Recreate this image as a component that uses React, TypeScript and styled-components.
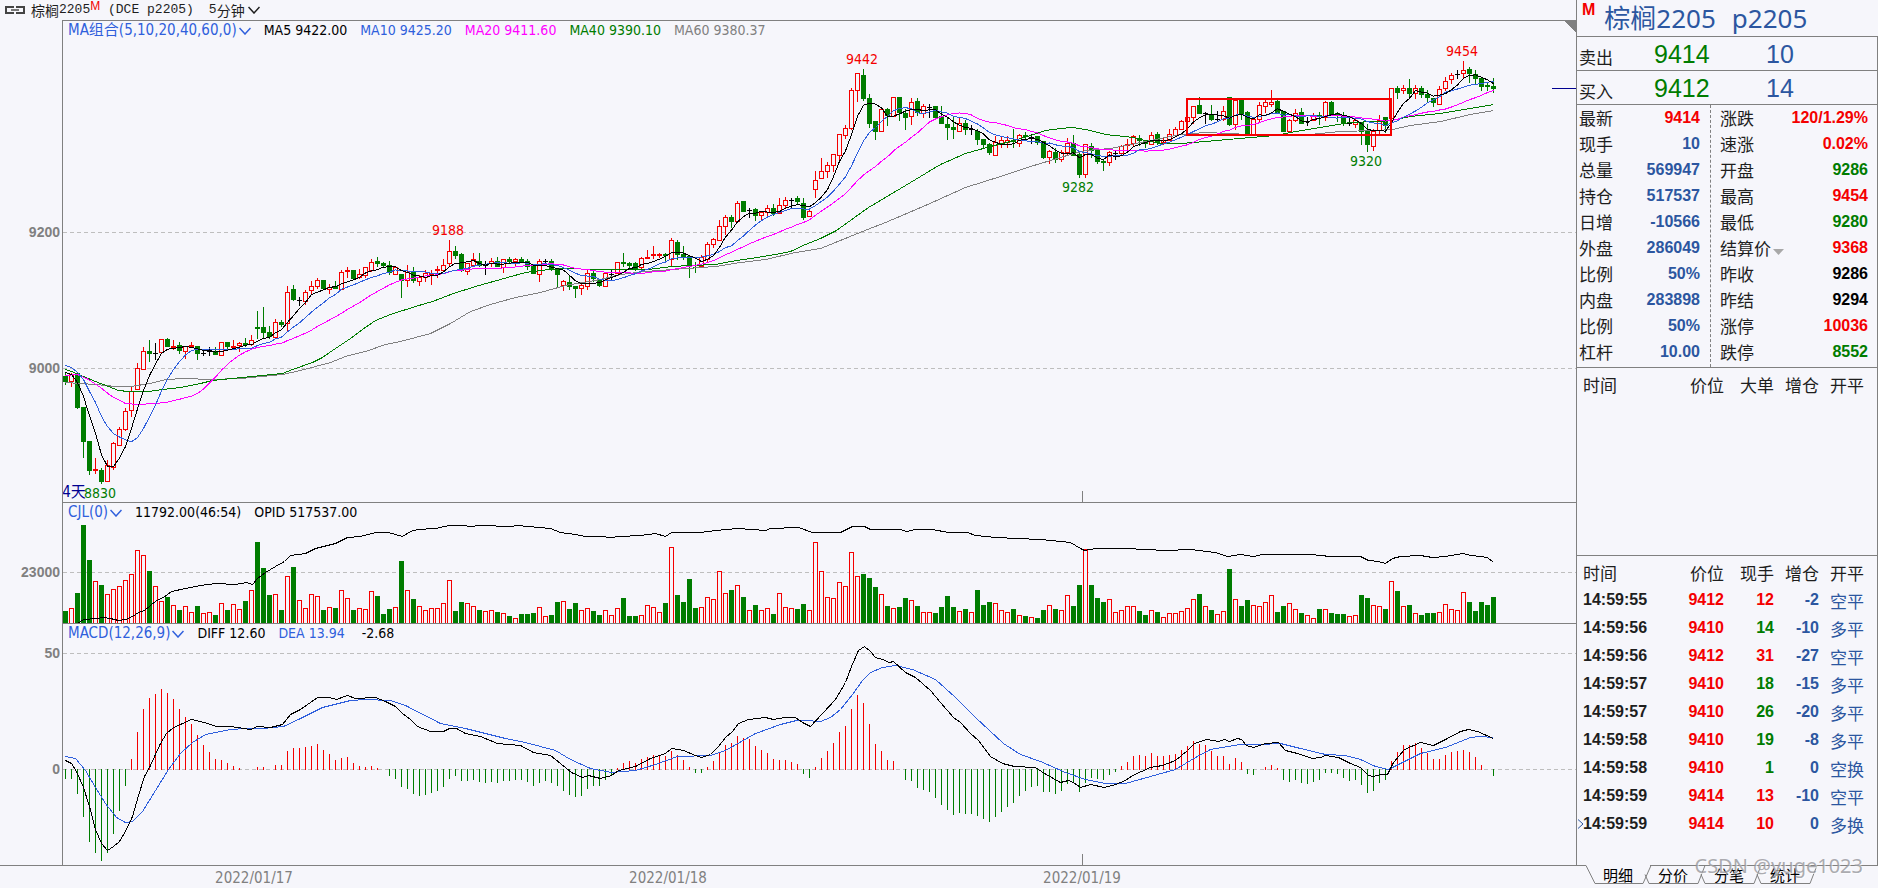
import React from "react";
import styled, { createGlobalStyle } from "styled-components";

const COLORS = {
  page: "#f6f6fb",
  line: "#808080",
  grid: "#bebebe",
  up: "#f40000",
  down: "#007c00",
  black: "#000000",
  blue: "#2f5fdc",
  magenta: "#ff00ff",
  slate: "#2c56a0",
  grey: "#808080",
  ink: "#1e1e1e",
};

const CHART_FONT = '"DejaVu Sans Condensed", "Noto Sans", "Noto Sans CJK SC", sans-serif';
const PANEL_FONT = '"Noto Sans CJK SC", sans-serif';
const NUMBER_FONT = '"Liberation Sans", "Noto Sans CJK SC", sans-serif';

/* Candles: kind (U up, D down, K unchanged), body top, body bottom, high, low. */
const CANDLES = `D376,382,373,385 U374,381,373,387 D373,408,372,409 D407,442,407,458 D441,471,441,475 U469,470,458,474 D470,482,468,484 U465,481,460,482 U443,467,442,470 U429,445,427,446
U411,429,408,431 U391,410,386,417 U368,389,363,390 U351,369,347,370 D351,354,340,362 K353,353,343,360 U339,352,339,353 D339,347,338,347 U346,347,340,350 D345,351,342,354
U346,351,346,359 U345,346,342,348 D346,354,346,360 K353,353,349,356 K351,351,347,356 D351,355,347,355 U342,355,342,356 D342,347,342,349 U346,347,340,349 U343,345,342,352
D343,345,338,347 U340,344,335,346 D327,329,311,339 D327,333,307,339 D332,337,326,339 U322,337,319,338 D322,325,320,327 U292,323,286,331 D289,300,285,301 K300,300,297,306
U292,301,290,305 U286,290,281,294 U280,286,278,289 D280,289,280,289 U287,289,284,294 D286,289,281,289 U272,289,270,289 U270,271,267,278 D270,279,270,279 U274,277,269,279
U267,275,267,278 U262,270,259,272 D261,264,257,267 D263,266,262,267 D265,273,261,275 U267,274,267,275 D274,281,274,298 U272,280,265,287 D271,281,267,283 U277,281,275,286
U273,277,270,282 U273,274,270,285 U269,270,266,278 U265,270,259,272 U251,263,240,266 D251,256,246,259 D254,271,253,272 U263,271,263,275 U259,265,253,267 D261,266,253,267
K265,265,261,275 U261,263,258,267 D261,267,257,267 U259,267,259,273 D259,262,257,264 U259,261,258,266 D259,262,257,263 D261,267,259,270 D266,274,266,274 U261,274,259,282
K261,261,259,264 D261,270,259,271 D268,275,268,287 U281,285,280,291 D282,287,275,290 D286,289,286,298 U285,288,283,295 U273,286,270,290 D273,279,271,282 D280,286,280,287
U273,286,273,286 K274,274,270,280 U262,273,262,273 D262,264,253,267 D263,266,262,268 D263,270,262,271 U258,267,257,270 U257,258,250,259 U254,255,246,259 U254,255,253,258
D254,256,253,261 U240,259,238,267 D242,255,240,260 D254,258,246,260 D256,267,256,278 D267,268,262,273 U257,266,255,267 U244,259,242,262 U239,244,238,248 U226,240,220,241
U217,226,215,235 D217,222,215,228 U203,221,201,222 D201,212,201,212 K210,210,208,218 D209,216,208,221 U212,215,211,220 U208,212,205,218 D208,214,204,216 U205,213,198,214
U200,205,197,208 K200,200,198,208 D198,202,196,205 D203,218,198,220 U211,216,208,217 U180,189,171,198 U171,178,158,179 U165,171,162,178 U154,165,154,172 U134,155,134,161
U128,135,125,139 U90,128,88,130 U73,90,73,102 D75,99,69,101 D98,124,94,128 D121,132,121,140 U109,131,108,132 D109,116,108,126 U97,116,97,117 D97,113,97,121
D113,118,109,130 U102,116,98,125 D101,113,98,116 U106,113,104,118 K107,107,104,118 D106,118,106,118 D116,124,106,124 D124,128,118,140 D127,130,117,139 U123,131,117,132
D123,130,120,135 K129,129,125,135 D131,140,129,145 D139,145,139,148 D144,153,143,155 U142,155,136,155 U140,143,137,148 U140,142,136,148 D140,142,129,148 U135,143,134,147
D135,137,132,139 K137,137,134,144 D136,143,136,145 D141,158,141,159 U151,157,150,164 D152,160,148,163 U152,159,150,162 U143,152,138,155 D143,156,135,156 D154,175,152,178
U144,174,144,178 D146,151,143,158 D150,162,150,164 D161,163,159,171 U152,162,151,166 K153,153,150,160 U146,153,145,155 U144,145,139,152 U136,143,135,146 D138,141,135,146
D142,144,142,148 U135,144,132,145 D134,143,132,145 U140,142,137,145 U134,140,129,141 U129,135,127,136 U121,129,120,130 U117,121,116,121 U106,117,106,124 D105,114,97,114
K113,113,112,124 D114,120,105,121 K119,119,111,122 U111,119,106,121 D97,125,97,126 U100,124,99,130 D99,114,99,120 D112,134,111,134 U119,134,119,134 U105,119,102,122
U102,106,100,113 U102,104,90,107 D101,113,100,113 D111,132,111,132 U120,131,119,132 U113,120,109,122 D112,124,108,124 K121,121,117,126 U116,120,113,121 D115,117,112,125
U102,117,101,121 D102,115,101,115 D113,116,112,122 D115,124,112,126 K123,123,118,126 U120,124,117,128 D122,132,122,145 D131,145,124,152 U131,146,129,151 U120,130,115,134
D117,126,117,133 U88,118,88,118 D88,93,86,99 U88,90,85,94 D88,94,79,97 U88,93,85,99 D88,95,86,98 D94,98,90,103 D98,103,98,107 U89,104,86,105
U81,88,77,91 U75,79,73,84 K74,74,70,79 U70,73,61,78 D69,74,67,83 D74,79,70,84 D78,87,78,91 D85,87,82,91 D86,89,78,93`
  .split(/\s+/)
  .map((entry) => {
    const [top, bottom, high, low] = entry.slice(1).split(",").map(Number);
    const kind = entry[0];
    return { kind, top, bottom, high, low, close: kind === "D" ? bottom : top };
  });

const numbers = (text: string) => text.trim().split(/\s+/).map(Number);

/* Top edge of each volume bar. */
const VOLUME = numbers(`
611 608 593 525 560 581 585 594 589 586 580 574 550 555 571 586 601 597 605 610
606 612 606 613 612 615 603 610 604 609 601 590 542 568 595 594 610 576 567 600
608 594 596 610 607 608 590 598 610 608 609 591 596 614 609 607 561 590 599 606
610 608 608 603 580 611 602 603 606 610 611 610 612 613 616 618 614 614 613 607
616 615 602 601 609 603 610 608 611 615 610 615 608 598 616 616 615 605 607 612
603 547 595 602 579 608 607 597 599 571 593 590 585 597 610 605 610 608 614 593
607 608 609 604 610 542 571 597 598 582 586 552 576 574 578 587 594 606 608 607
598 600 606 612 612 613 607 596 607 611 609 612 590 605 602 603 610 612 609 615
616 617 618 610 605 609 610 595 606 585 549 585 598 602 599 612 610 606 606 611
615 610 612 617 613 613 611 608 599 594 606 610 614 611 569 599 606 600 605 606
602 595 612 606 603 609 613 615 618 609 609 613 614 614 616 615 595 598 605 606
609 581 591 606 605 613 615 613 613 612 604 609 610 592 602 611 602 605 597`);

/* MACD histogram; three units per pixel, positive above the zero line. */
const HISTOGRAM = numbers(`
-26 -26 -71 -140 -215 -248 -272 -248 -191 -122 -47 30 112 181 214 226 241 229 211 181
156 136 103 73 52 31 27 19 10 4 0 0 7 7 1 13 13 55 64 64
67 70 76 58 46 28 34 37 19 10 7 10 4 0 -19 -26 -50 -56 -71 -77
-74 -68 -62 -50 -26 -17 -32 -32 -29 -35 -38 -35 -38 -32 -32 -29 -29 -35 -47 -38
-32 -38 -47 -62 -74 -80 -77 -56 -47 -47 -29 -14 4 19 25 19 31 37 42 43
40 55 42 28 7 -8 -8 7 25 49 73 79 100 94 91 70 58 48 31 28
28 22 16 -11 -23 7 34 55 79 112 130 181 223 199 136 76 55 28 25 0
-29 -32 -53 -59 -65 -83 -104 -119 -134 -128 -131 -131 -137 -146 -155 -140 -125 -110 -98 -77
-62 -50 -47 -65 -65 -71 -62 -41 -38 -65 -38 -23 -26 -29 -14 -5 10 22 40 43
40 49 40 40 43 46 58 70 85 76 73 55 40 40 16 34 22 -11 -14 0
7 13 4 -29 -35 -29 -38 -41 -35 -29 -8 -8 -11 -23 -32 -29 -44 -68 -62 -38
-29 25 52 73 73 79 64 49 31 31 43 52 55 58 52 37 13 0 -17`);

const MA40 = "65,369 71,371 83,376 95,381 108,386 118,390 128,391 148,391 162,389 180,387 200,383 212,380 232,378 252,376 282,373 292,369 312,362 322,357 332,350 350,338 362,329 375,320 390,314 415,306 432,301 453,293 475,286 500,279 525,272 540,270 560,268 600,269 648,269 672,266 690,265 715,264 730,261 750,258 775,254 790,251 805,244 820,238 836,230 868,207 895,191 925,173 940,164 965,153 990,146 1010,141 1030,135 1045,130 1060,128 1072,127 1090,130 1105,134 1133,137 1140,139 1160,143 1180,143 1205,141 1250,137 1275,135 1295,131 1320,127 1350,122 1375,121 1390,120 1410,116 1440,113 1470,108 1493,104";
const MA60 = "65,382 95,384 115,386 130,386 150,383 165,379 185,378 210,379 240,378 282,374 300,370 330,362 345,356 368,350 385,344 400,341 430,333 450,323 470,311 490,304 515,297 540,292 565,285 600,279 620,274 645,271 672,269 715,266 740,262 765,259 795,252 820,248 867,229 885,222 925,205 945,196 965,187 1000,176 1030,166 1050,160 1070,154 1085,150 1110,148 1130,144 1150,140 1180,134 1205,132 1250,134 1275,135 1310,134 1340,131 1375,130 1392,129 1410,125 1440,121 1470,114 1493,110";
const OPEN_INTEREST = "77,623 83,619 97,618 103,617 110,618 118,620 125,619 132,616 138,612 144,610 150,605 156,600 163,597 171,591 185,588 200,585 215,583 235,584 246,582 252,584 257,578 265,572 275,566 284,561 290,555 305,553 315,548 335,543 347,537 360,536 375,532 388,532 395,534 402,536 410,531 417,529 435,528 449,525 463,525 470,526 480,525 510,526 517,525 550,528 560,532 575,534 585,536 600,536 610,537 620,536 640,535 655,533 665,536 671,532 700,532 715,530 737,528 765,530 770,528 798,527 812,532 840,532 852,526 864,526 870,529 900,529 906,531 915,529 932,529 948,532 967,532 975,535 995,537 1040,539 1070,542 1080,548 1084,550 1095,548 1125,548 1165,550 1190,549 1215,552 1227,556 1240,554 1253,556 1262,554 1310,554 1330,556 1360,556 1368,560 1378,561 1385,563 1392,558 1400,556 1420,555 1432,557 1445,556 1463,553 1470,555 1480,556 1487,557 1493,562";
const DIFF = "65,760 71,763 76,771 83,787 89,806 95,829 101,843 107,850 113,846 119,841 126,829 132,816 138,795 144,776 150,765 160,743 166,733 173,727 180,724 191,719 204,722 216,726 230,726 250,729 257,726 270,727 282,724 290,714 300,709 317,697 329,697 336,699 347,695 355,698 375,697 385,701 395,706 402,713 410,719 417,726 430,731 443,731 449,728 456,728 465,733 480,736 497,743 520,745 533,752 550,755 560,763 571,772 582,777 588,775 600,778 611,775 618,770 635,766 650,758 665,753 671,748 683,750 695,755 701,757 710,754 718,746 725,737 732,731 738,723 748,719 765,717 773,719 785,717 795,717 802,722 810,726 822,713 835,699 845,682 851,666 858,650 864,646 870,651 875,657 882,659 889,662 893,661 905,672 915,677 930,690 940,702 953,717 960,722 970,733 978,740 990,756 1002,763 1014,766 1035,767 1044,773 1060,782 1068,780 1073,782 1080,787 1090,784 1104,787 1115,784 1125,780 1132,775 1150,767 1162,765 1175,760 1187,750 1194,743 1206,739 1218,741 1224,739 1229,741 1237,738 1241,739 1246,745 1253,747 1265,743 1278,742 1285,750 1297,753 1312,758 1320,757 1325,755 1338,757 1350,763 1360,767 1368,775 1373,776 1380,774 1387,774 1393,762 1404,749 1420,742 1433,745 1445,739 1460,731 1468,729 1477,731 1493,738";
const DEA = "65,756 75,758 85,770 95,787 105,803 116,817 125,822 132,821 142,811 155,790 168,769 180,753 192,742 205,734 230,729 245,728 262,728 283,726 300,718 322,707 350,700 365,699 390,700 405,705 440,723 465,728 505,738 525,742 555,750 570,759 590,768 611,772 635,770 655,764 677,756 710,755 725,750 755,733 780,724 796,720 805,720 820,721 830,717 840,709 852,694 862,680 870,672 882,667 895,665 912,669 935,679 955,697 975,717 1003,743 1020,754 1040,761 1065,772 1085,779 1105,783 1125,783 1150,776 1175,769 1195,757 1210,749 1240,744 1260,744 1280,743 1300,748 1325,754 1345,755 1360,759 1375,766 1388,769 1400,763 1420,753 1445,747 1470,737 1480,736 1493,737";

const FIRST_X = 65;
const STEP = 6;
const barX = (i: number) => FIRST_X + i * STEP;

/* Moving average of the closes; `lead` covers the bars before a full window. */
function movingAverage(period: number, lead: string) {
  const points: string[] = [lead];
  for (let i = period - 1; i < CANDLES.length; i++) {
    const window = CANDLES.slice(i - period + 1, i + 1);
    const mean = window.reduce((sum, c) => sum + c.close, 0) / period;
    points.push(`${barX(i)},${mean.toFixed(1)}`);
  }
  return points.join(" ");
}

const MA5 = movingAverage(5, "65,372 71,374 77,382 83,396");
const MA10 = movingAverage(10, "65,365 71,367 77,372 83,379 89,391 95,402 101,416 107,426 113,433");
const MA20 = movingAverage(20, "65,375 77,374 88,379 100,387 110,395 125,403 137,404 155,403 165,402");

const GlobalStyle = createGlobalStyle`
  *, *::before, *::after { box-sizing: border-box; }
  body { margin: 0; background: ${COLORS.page}; color: ${COLORS.ink}; }
  button { font: inherit; color: inherit; background: none; border: 0; padding: 0; cursor: pointer; }
`;

const Terminal = styled.div`
  display: flex;
  min-height: 100vh;
  background: ${COLORS.page};
  overflow: hidden;
`;

const ChartColumn = styled.main`
  flex: 1 1 0;
  min-width: 0;
`;

const SymbolBar = styled.header`
  display: flex;
  align-items: center;
  height: 20px;
  padding-left: 5px;
  gap: 6px;
  font: 13px/20px "Liberation Mono", "Noto Sans CJK SC", monospace;
  white-space: pre;
`;

const SymbolName = styled.h1`
  display: flex;
  margin: 0;
  font: inherit;
`;

const Hanzi = styled.span`
  font: 14px/20px ${PANEL_FONT};
`;

const MainFlag = styled.span`
  color: ${COLORS.up};
  font: 12px/12px "Liberation Sans", sans-serif;
`;

const PeriodButton = styled.button`
  display: flex;
  align-items: center;
  margin-left: 9px;

  svg { margin-left: 3px; }
`;

const Pane = styled.section<{ $height: number }>`
  display: flex;
  height: ${(p) => p.$height}px;
`;

const Axis = styled.svg`
  flex: 0 0 62px;
  width: 62px;
  height: 100%;
  font: bold 14px ${NUMBER_FONT};
  fill: ${COLORS.grey};
  text-anchor: end;
`;

const Plot = styled.div`
  position: relative;
  flex: 1 1 0;
  min-width: 0;
  border-left: 1px solid ${COLORS.line};
  border-top: 1px solid ${COLORS.line};
`;

const Canvas = styled.svg`
  display: block;
  width: 100%;
  height: 100%;
  font: 14px ${CHART_FONT};
  text-anchor: middle;
  shape-rendering: crispEdges;
`;

const DaysLabel = styled.text`
  font-size: 15px;
  fill: #000090;
`;

const Legend = styled.div`
  position: absolute;
  top: 0;
  left: 5px;
  display: flex;
  gap: 13px;
  font: 14px/19px ${CHART_FONT};
  white-space: pre;
`;

const LegendItem = styled.span<{ $color: string }>`
  color: ${(p) => p.$color};
`;

const IndicatorButton = styled.button`
  display: flex;
  align-items: center;
  gap: 2px;
  font-size: 15px;
  color: ${COLORS.blue};
`;

const DateRow = styled.div`
  height: 22px;
  border-top: 1px solid ${COLORS.line};
`;

const DateAxis = styled.svg`
  display: block;
  width: 100%;
  height: 21px;
  font: 15px ${CHART_FONT};
  fill: ${COLORS.grey};
  text-anchor: middle;
`;

const SidePanel = styled.aside`
  display: flex;
  flex-direction: column;
  flex: 0 0 302px;
  font-family: ${PANEL_FONT};
`;

const PanelBody = styled.div`
  display: flex;
  flex-direction: column;
  height: 866px;
  border-left: 1px solid ${COLORS.line};
`;

const Title = styled.h2`
  display: flex;
  margin: 0;
  height: 36px;
  padding-left: 5px;
  font: 26px/36px "Noto Sans", ${PANEL_FONT};
  color: ${COLORS.slate};

  sup { font: bold 16px/20px ${NUMBER_FONT}; color: ${COLORS.up}; }
`;

const TitlePart = styled.span<{ $gap: number }>`
  margin-left: ${(p) => p.$gap}px;
`;

const QuoteRow = styled.div`
  display: grid;
  grid-template-columns: 75px 112px 1fr;
  height: 34px;
  padding-left: 2px;
  border-top: 1px solid ${COLORS.line};
  border-right: 1px solid ${COLORS.line};
  align-items: center;
`;

const QuoteLabel = styled.span`
  font-size: 17px;
  line-height: 24px;
  padding-top: 6px;
`;

const QuoteValue = styled.span<{ $color: string }>`
  font: 25px/32px ${NUMBER_FONT};
  color: ${(p) => p.$color};
`;

const Stats = styled.div`
  display: flex;
  height: 263px;
  border-top: 1px solid ${COLORS.line};
  border-right: 1px solid ${COLORS.line};
`;

const StatList = styled.dl<{ $first?: boolean }>`
  margin: 0;
  flex: ${(p) => (p.$first ? "0 0 134px" : "1 1 0")};
  padding: ${(p) => (p.$first ? "0 10px 0 2px" : "0 9px 0 9px")};
  border-right: ${(p) => (p.$first ? `1px dashed ${COLORS.line}` : "0")};
`;

const Stat = styled.div`
  display: flex;
  justify-content: space-between;
  height: 26px;
  line-height: 25px;
  font-size: 17px;
  white-space: nowrap;
`;

const StatValue = styled.dd<{ $color: string }>`
  margin: 0;
  font: bold 16px/26px ${NUMBER_FONT};
  color: ${(p) => p.$color};
`;

const SettleButton = styled.button`
  display: flex;
  align-items: center;
  gap: 2px;
  line-height: 25px;

  svg { margin-top: 8px; }
`;

const Trades = styled.div<{ $grow?: boolean }>`
  flex: ${(p) => (p.$grow ? "1 1 0" : "0 0 188px")};
  border-top: 1px solid ${COLORS.line};
  border-right: 1px solid ${COLORS.line};
  padding-top: 2px;
`;

const TradeTable = styled.table`
  width: 100%;
  table-layout: fixed;
  border-collapse: collapse;
  text-align: right;

  th, td { padding: 0; height: 28px; line-height: 28px; white-space: nowrap; }
  th { font-size: 17px; font-weight: 400; line-height: 27px; }
  td { font: bold 16px/28px ${NUMBER_FONT}; }
  th:first-child, td:first-child { text-align: left; padding-left: 6px; position: relative; }
  th:last-child, td:last-child { text-align: left; padding-left: 11px; }
  td:last-child { font: 17px/27px ${PANEL_FONT}; }
`;

const Cell = styled.td<{ $color: string }>`
  color: ${(p) => p.$color};
`;

const RowMarker = styled.svg`
  position: absolute;
  left: 0;
  top: 9px;
`;

const Tabs = styled.nav`
  position: relative;
  display: flex;
  align-items: flex-start;
  height: 22px;
  margin-top: -1px;

  &::before { content: ""; width: 10px; border-top: 1px solid ${COLORS.line}; }
  &::after { content: ""; flex: 1; border-top: 1px solid ${COLORS.line}; }
`;

const TabButton = styled.button<{ $active?: boolean }>`
  position: relative;
  width: ${(p) => (p.$active ? 64 : 56)}px;
  height: 19px;
  padding-left: ${(p) => (p.$active ? 0 : 8)}px;
  text-align: ${(p) => (p.$active ? "center" : "left")};
  border-top: 1px solid ${(p) => (p.$active ? "transparent" : COLORS.line)};
  font: 15px/16px ${PANEL_FONT};
  color: ${COLORS.black};

  svg { position: absolute; left: ${(p) => (p.$active ? 0 : -6)}px; top: -1px; overflow: visible; pointer-events: none; }
`;

const Watermark = styled.span`
  position: absolute;
  right: 15px;
  top: -12px;
  font: 20px/26px "Noto Sans", sans-serif;
  color: rgba(150, 150, 155, 0.8);
  text-shadow: 1px 1px 0 rgba(255, 255, 255, 0.6);
  pointer-events: none;
`;

const Chevron = ({ color }: { color: string }) => (
  <svg width="12" height="8" viewBox="0 0 12 8" fill="none" stroke={color} strokeWidth="1.5" aria-hidden="true">
    <path d="M0.5 1 L6 7 L11.5 1" />
  </svg>
);

const LinkIcon = () => (
  <svg width="20" height="8" viewBox="0 0 20 8" fill="none" stroke="#444" strokeWidth="2" aria-hidden="true">
    <path d="M8 2V1H1V7H8V6M12 2V1H19V7H12V6" />
    <path d="M6 4H14" stroke="#777" />
  </svg>
);

const GridLine = ({ y }: { y: number }) => (
  <line x1="0" x2="100%" y1={y + 0.5} y2={y + 0.5} stroke={COLORS.grid} strokeDasharray="4 3" />
);

const Curve = ({ points, color }: { points: string; color: string }) => (
  <polyline points={points} fill="none" stroke={color} transform="translate(0.5 0.5)" />
);

const Candle = ({ index }: { index: number }) => {
  const { kind, top, bottom, high, low } = CANDLES[index];
  const x = barX(index);
  const color = kind === "U" ? COLORS.up : kind === "D" ? COLORS.down : COLORS.black;
  return (
    <g>
      <rect x={x} y={high} width={1} height={Math.max(low - high, 1)} fill={color} />
      {kind === "U" ? (
        <rect x={x - 1.5} y={top + 0.5} width={4} height={Math.max(bottom - top, 1)} fill={COLORS.page} stroke={color} />
      ) : (
        <rect x={x - 2} y={top} width={5} height={Math.max(bottom - top, 1)} fill={color} />
      )}
    </g>
  );
};

const VolumeBar = ({ index }: { index: number }) => {
  const x = barX(index);
  const y = VOLUME[index];
  return CANDLES[index].kind === "D" ? (
    <rect x={x - 2} y={y} width={5} height={623 - y} fill={COLORS.down} />
  ) : (
    <rect x={x - 1.5} y={y + 0.5} width={4} height={623 - y} fill={COLORS.page} stroke={COLORS.up} />
  );
};

const HistogramBar = ({ index }: { index: number }) => {
  const size = Math.round(HISTOGRAM[index] / 3);
  if (size === 0) return null;
  return (
    <rect
      x={barX(index)}
      y={size > 0 ? 769 - size : 769}
      width={1}
      height={Math.abs(size) + 1}
      fill={size > 0 ? COLORS.up : COLORS.down}
    />
  );
};

const EXTREMES: [number, number, string, string][] = [
  [100, 498, "8830", COLORS.down],
  [448, 235, "9188", COLORS.up],
  [862, 64, "9442", COLORS.up],
  [1078, 192, "9282", COLORS.down],
  [1366, 166, "9320", COLORS.down],
  [1462, 56, "9454", COLORS.up],
];

const STATS_LEFT: [string, string, string][] = [
  ["最新", "9414", COLORS.up],
  ["现手", "10", COLORS.slate],
  ["总量", "569947", COLORS.slate],
  ["持仓", "517537", COLORS.slate],
  ["日增", "-10566", COLORS.slate],
  ["外盘", "286049", COLORS.slate],
  ["比例", "50%", COLORS.slate],
  ["内盘", "283898", COLORS.slate],
  ["比例", "50%", COLORS.slate],
  ["杠杆", "10.00", COLORS.slate],
];

const STATS_RIGHT: [string, string, string][] = [
  ["涨跌", "120/1.29%", COLORS.up],
  ["速涨", "0.02%", COLORS.up],
  ["开盘", "9286", COLORS.down],
  ["最高", "9454", COLORS.up],
  ["最低", "9280", COLORS.down],
  ["结算价", "9368", COLORS.up],
  ["昨收", "9286", COLORS.black],
  ["昨结", "9294", COLORS.black],
  ["涨停", "10036", COLORS.up],
  ["跌停", "8552", COLORS.down],
];

const TRADES: [string, string, string, string, string, string][] = [
  ["14:59:55", "9412", "12", COLORS.up, "-2", "空平"],
  ["14:59:56", "9410", "14", COLORS.down, "-10", "多平"],
  ["14:59:56", "9412", "31", COLORS.up, "-27", "空平"],
  ["14:59:57", "9410", "18", COLORS.down, "-15", "多平"],
  ["14:59:57", "9410", "26", COLORS.down, "-20", "多平"],
  ["14:59:58", "9410", "19", COLORS.down, "-8", "多平"],
  ["14:59:58", "9410", "1", COLORS.down, "0", "空换"],
  ["14:59:59", "9414", "13", COLORS.up, "-10", "空平"],
  ["14:59:59", "9414", "10", COLORS.up, "0", "多换"],
];

const TimeCol = styled.col`
  width: 78px;
`;
const PriceCol = styled.col`
  width: 69px;
`;
const SizeCol = styled.col`
  width: 50px;
`;
const ChangeCol = styled.col`
  width: 45px;
`;

const TradeHead = ({ size }: { size: string }) => (
  <>
    <colgroup>
      <TimeCol />
      <PriceCol />
      <SizeCol />
      <ChangeCol />
      <col />
    </colgroup>
    <thead>
      <tr>
        <th scope="col">时间</th>
        <th scope="col">价位</th>
        <th scope="col">{size}</th>
        <th scope="col">增仓</th>
        <th scope="col">开平</th>
      </tr>
    </thead>
  </>
);

const bars = CANDLES.map((_, i) => i);

export default function App() {
  return (
    <Terminal>
      <GlobalStyle />
      <ChartColumn>
        <SymbolBar>
          <LinkIcon />
          <SymbolName>
            <Hanzi>棕榈</Hanzi>2205<MainFlag>M</MainFlag> (DCE p2205)
          </SymbolName>
          <PeriodButton type="button">
            5<Hanzi>分钟</Hanzi>
            <Chevron color={COLORS.ink} />
          </PeriodButton>
        </SymbolBar>

        <Pane $height={482}>
          <Axis>
            <text x="60" y="217">9200</text>
            <text x="60" y="353">9000</text>
          </Axis>
          <Plot>
            <Canvas>
              <GridLine y={211} />
              <GridLine y={347} />
              <g transform="translate(-63 -21)">
                {bars.map((i) => <Candle key={i} index={i} />)}
                <Curve points={MA60} color={COLORS.grey} />
                <Curve points={MA40} color={COLORS.down} />
                <Curve points={MA20} color={COLORS.magenta} />
                <Curve points={MA10} color={COLORS.blue} />
                <Curve points={MA5} color={COLORS.black} />
                <rect x="1187" y="99" width="204" height="36" fill="none" stroke={COLORS.up} strokeWidth="2" />
                <rect x="1082" y="491" width="1" height="11" fill={COLORS.line} />
                {EXTREMES.map(([x, y, label, color]) => (
                  <text key={label} x={x} y={y} fill={color}>{label}</text>
                ))}
                <DaysLabel x="74" y="497">4天</DaysLabel>
              </g>
              <svg x="100%" overflow="visible">
                <rect x="-24" y="67" width="24" height="1" fill="#000090" />
                <path d="M-12 0H0V12Z" fill={COLORS.line} />
              </svg>
            </Canvas>
            <Legend>
              <IndicatorButton type="button">
                MA组合(5,10,20,40,60,0)
                <Chevron color={COLORS.blue} />
              </IndicatorButton>
              <LegendItem $color={COLORS.black}>MA5 9422.00</LegendItem>
              <LegendItem $color={COLORS.blue}>MA10 9425.20</LegendItem>
              <LegendItem $color={COLORS.magenta}>MA20 9411.60</LegendItem>
              <LegendItem $color={COLORS.down}>MA40 9390.10</LegendItem>
              <LegendItem $color={COLORS.grey}>MA60 9380.37</LegendItem>
            </Legend>
          </Plot>
        </Pane>

        <Pane $height={121}>
          <Axis>
            <text x="60" y="75">23000</text>
          </Axis>
          <Plot>
            <Canvas>
              <GridLine y={69} />
              <g transform="translate(-63 -503)">
                {bars.map((i) => <VolumeBar key={i} index={i} />)}
                <Curve points={OPEN_INTEREST} color={COLORS.black} />
              </g>
            </Canvas>
            <Legend>
              <IndicatorButton type="button">
                CJL(0)
                <Chevron color={COLORS.blue} />
              </IndicatorButton>
              <LegendItem $color={COLORS.black}>11792.00(46:54)</LegendItem>
              <LegendItem $color={COLORS.black}>OPID 517537.00</LegendItem>
            </Legend>
          </Plot>
        </Pane>

        <Pane $height={242}>
          <Axis>
            <text x="60" y="35">50</text>
            <text x="60" y="151">0</text>
          </Axis>
          <Plot>
            <Canvas>
              <GridLine y={29} />
              <GridLine y={145} />
              <g transform="translate(-63 -624)">
                {bars.map((i) => <HistogramBar key={i} index={i} />)}
                <Curve points={DEA} color={COLORS.blue} />
                <Curve points={DIFF} color={COLORS.black} />
                <rect x="1082" y="854" width="1" height="11" fill={COLORS.line} />
              </g>
            </Canvas>
            <Legend>
              <IndicatorButton type="button">
                MACD(12,26,9)
                <Chevron color={COLORS.blue} />
              </IndicatorButton>
              <LegendItem $color={COLORS.black}>DIFF 12.60</LegendItem>
              <LegendItem $color={COLORS.blue}>DEA 13.94</LegendItem>
              <LegendItem $color={COLORS.black}> -2.68</LegendItem>
            </Legend>
          </Plot>
        </Pane>

        <DateRow>
          <DateAxis>
            <text x="254" y="17">2022/01/17</text>
            <text x="668" y="17">2022/01/18</text>
            <text x="1082" y="17">2022/01/19</text>
          </DateAxis>
        </DateRow>
      </ChartColumn>

      <SidePanel>
        <PanelBody>
          <Title>
            <sup>M</sup>
            <TitlePart $gap={9}>棕榈2205</TitlePart>
            <TitlePart $gap={16}>p2205</TitlePart>
          </Title>
          <QuoteRow>
            <QuoteLabel>卖出</QuoteLabel>
            <QuoteValue $color={COLORS.down}>9414</QuoteValue>
            <QuoteValue $color={COLORS.slate}>10</QuoteValue>
          </QuoteRow>
          <QuoteRow>
            <QuoteLabel>买入</QuoteLabel>
            <QuoteValue $color={COLORS.down}>9412</QuoteValue>
            <QuoteValue $color={COLORS.slate}>14</QuoteValue>
          </QuoteRow>
          <Stats>
            <StatList $first>
              {STATS_LEFT.map(([label, value, color], i) => (
                <Stat key={i}>
                  <dt>{label}</dt>
                  <StatValue $color={color}>{value}</StatValue>
                </Stat>
              ))}
            </StatList>
            <StatList>
              {STATS_RIGHT.map(([label, value, color]) => (
                <Stat key={label}>
                  <dt>
                    {label === "结算价" ? (
                      <SettleButton type="button">
                        {label}
                        <svg width="11" height="6" aria-hidden="true">
                          <path d="M0 0H11L5.5 6Z" fill="#a8a8a8" />
                        </svg>
                      </SettleButton>
                    ) : (
                      label
                    )}
                  </dt>
                  <StatValue $color={color}>{value}</StatValue>
                </Stat>
              ))}
            </StatList>
          </Stats>
          <Trades>
            <TradeTable>
              <TradeHead size="大单" />
            </TradeTable>
          </Trades>
          <Trades $grow>
            <TradeTable>
              <TradeHead size="现手" />
              <tbody>
                {TRADES.map(([time, price, size, sizeColor, change, side], i) => (
                  <tr key={i}>
                    <Cell $color={COLORS.ink}>
                      {i === TRADES.length - 1 && (
                        <RowMarker width="7" height="10" fill="none" stroke={COLORS.slate} aria-hidden="true">
                          <path d="M1 0.5L6 5L1 9.5" />
                        </RowMarker>
                      )}
                      {time}
                    </Cell>
                    <Cell $color={COLORS.up}>{price}</Cell>
                    <Cell $color={sizeColor}>{size}</Cell>
                    <Cell $color={COLORS.slate}>{change}</Cell>
                    <Cell $color={COLORS.slate}>{side}</Cell>
                  </tr>
                ))}
              </tbody>
            </TradeTable>
          </Trades>
        </PanelBody>
        <Tabs>
          <TabButton type="button" $active>
            明细
            <svg width="66" height="19" fill="none" stroke={COLORS.line} aria-hidden="true">
              <path d="M0 0.5L9 18.5H57L65 0.5" />
            </svg>
          </TabButton>
          {["分价", "分笔", "统计"].map((label) => (
            <TabButton type="button" key={label}>
              {label}
              <svg width="62" height="19" fill="none" stroke={COLORS.line} aria-hidden="true">
                <path d="M1 9.5L5 18.5H54L61 0.5" />
              </svg>
            </TabButton>
          ))}
          <Watermark>CSDN @yuge1023</Watermark>
        </Tabs>
      </SidePanel>
    </Terminal>
  );
}
